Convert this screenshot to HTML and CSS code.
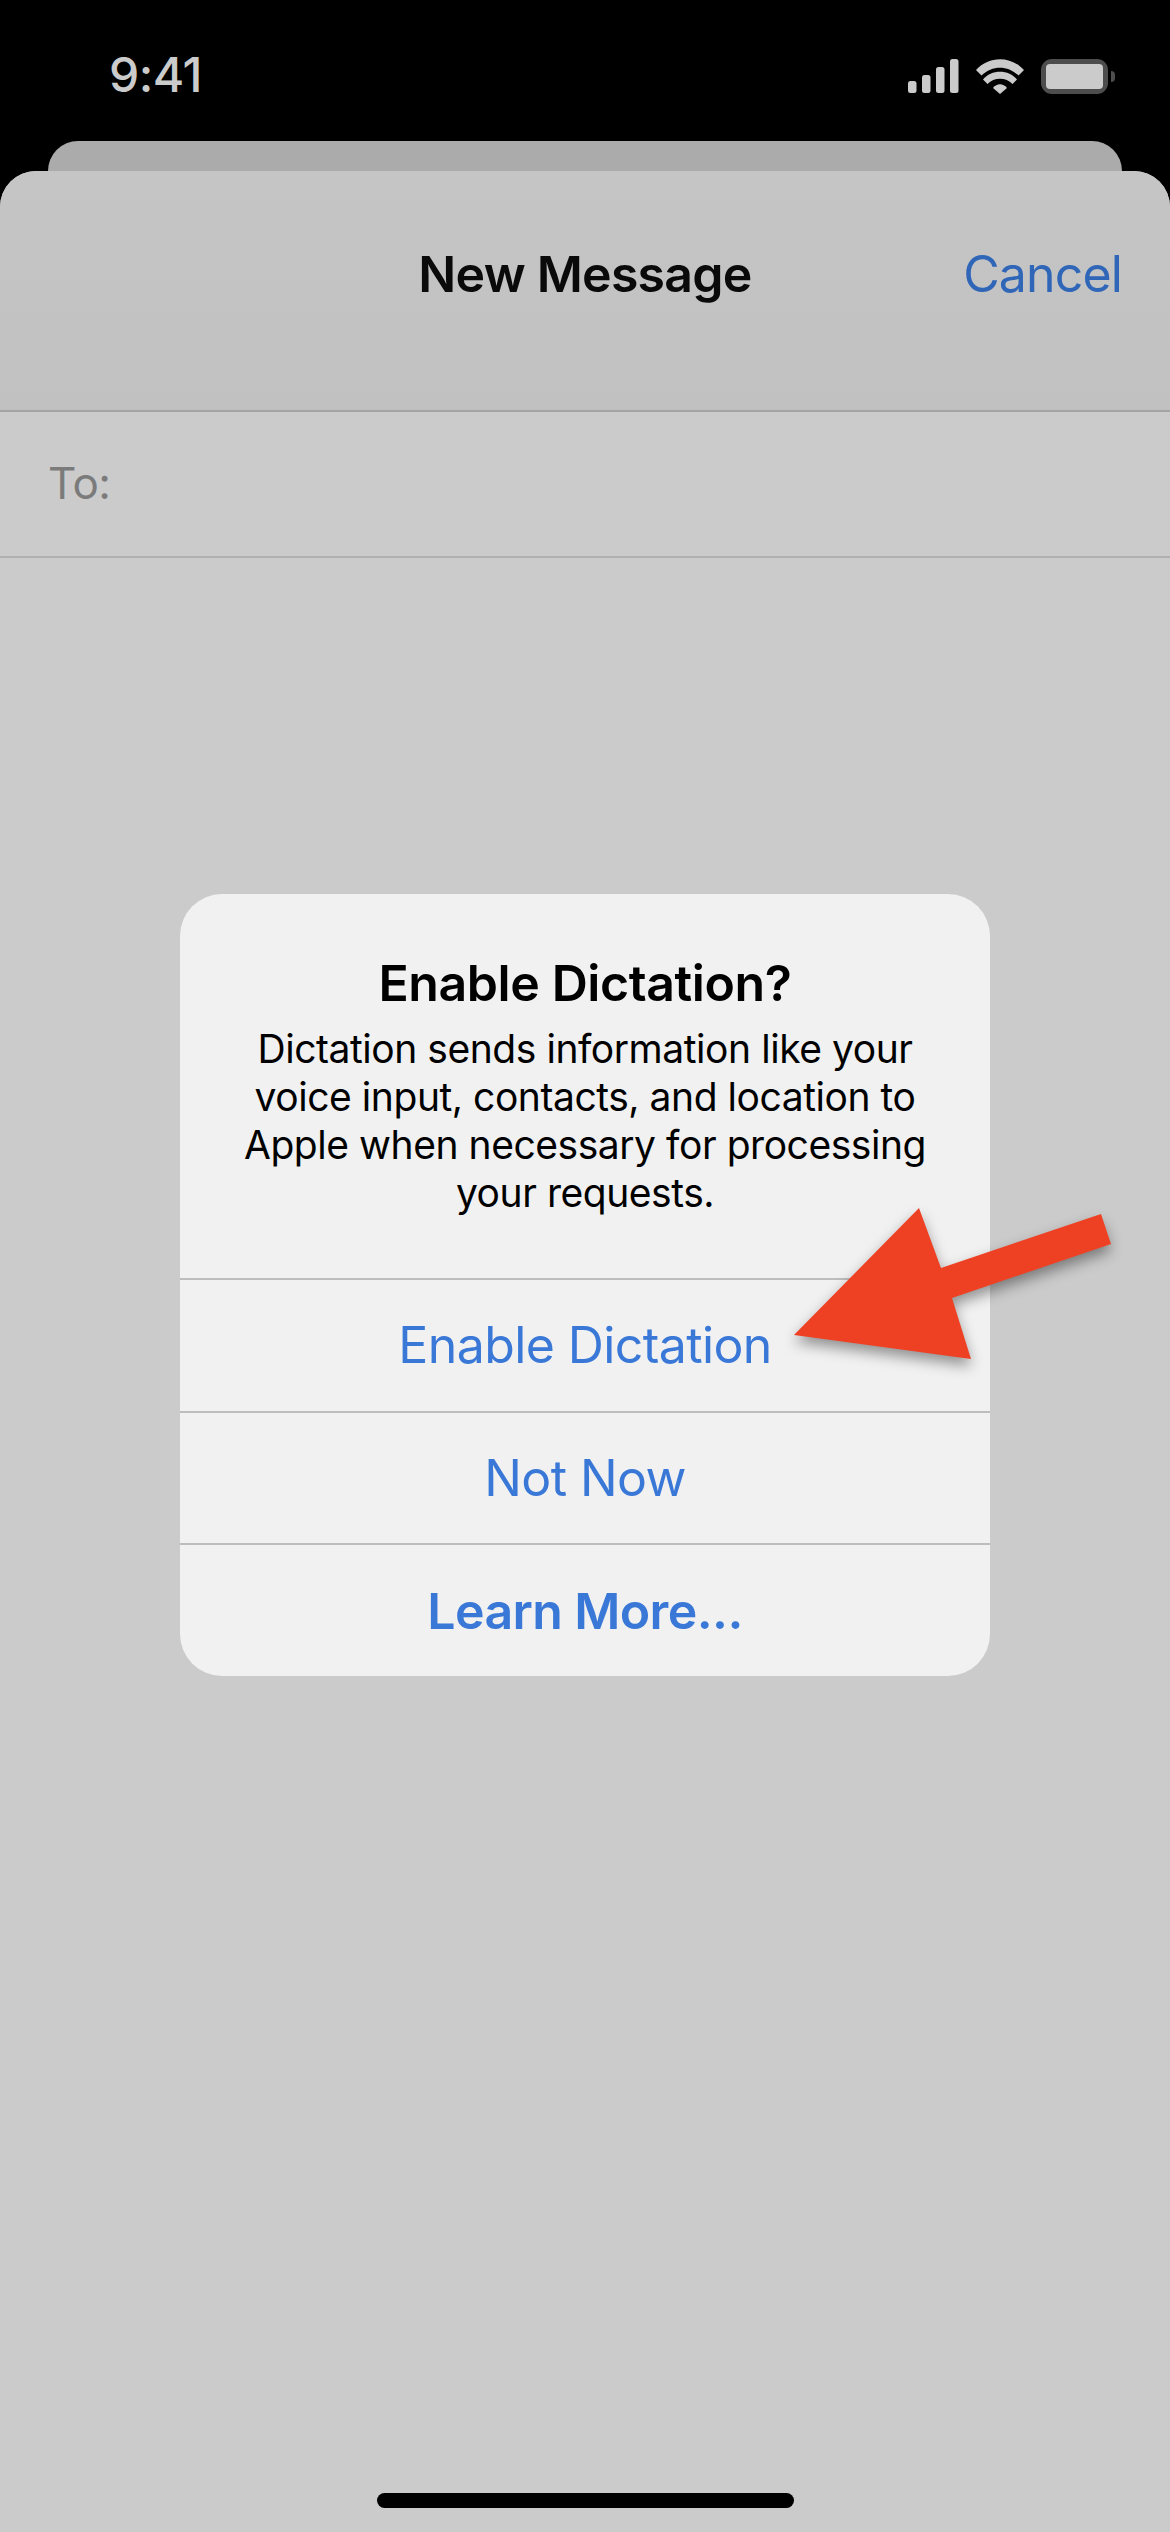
FILE: index.html
```html
<!DOCTYPE html>
<html lang="en">
<head>
<meta charset="utf-8">
<title>New Message</title>
<link rel="stylesheet" href="styles.css">
</head>
<body>
<div class="phone">
  <header class="status">
    <span class="time">9:41</span>
    <div class="status-icons">
      <svg class="signal" width="51" height="34" viewBox="0 0 51 34"><rect x="0" y="22" width="8.5" height="12" rx="2.5"/><rect x="14" y="16" width="8.5" height="18" rx="2.5"/><rect x="28" y="8" width="8.5" height="26" rx="2.5"/><rect x="42" y="0" width="8.5" height="34" rx="2.5"/></svg>
      <svg class="wifi" width="48" height="35" viewBox="0 0 48 35"><path d="M0 11C13-3.5 35-3.500 48 11L42.500 16.500C32 6 16 6 5.500 16.500Z"/><path d="M7 20.500C15 10 33 10 41 20.500L36.500 25C30 18 18 18 11.500 25Z"/><path d="M17 29C21 24 27 24 31 29L24 35Z"/></svg>
      <div class="battery"><div class="battery-body"><div class="battery-fill"></div></div><div class="battery-nub"></div></div>
    </div>
  </header>
  <div class="back-card"></div>
  <main class="sheet">
    <div class="nav">
      <h1 class="nav-title">New Message</h1>
      <button class="nav-cancel">Cancel</button>
    </div>
    <div class="to-row"><span class="to-label">To:</span></div>
    <div class="sheet-body"></div>
    <div class="home-wrap"><div class="home-bar"></div></div>
  </main>

  <section class="alert">
    <div class="alert-text">
      <h2 class="alert-title">Enable Dictation?</h2>
      <p class="alert-body">Dictation sends information like your<br>voice input, contacts, and location to<br>Apple when necessary for processing<br>your requests.</p>
    </div>
    <button class="alert-btn">Enable Dictation</button>
    <button class="alert-btn">Not Now</button>
    <button class="alert-btn alert-btn-bold">Learn More...</button>
  </section>

  <svg class="arrow" width="1170" height="2532" viewBox="0 0 1170 2532"><polygon points="794,1335 919,1208 941,1268 1101,1214 1111,1244 952,1298 971,1359"/></svg>
</div>
</body>
</html>
```
FILE: styles.css
```css
* { box-sizing: border-box; margin: 0; padding: 0; }
html, body { width: 1170px; height: 2532px; overflow: hidden; background: #000; }
body { font-family: Inter, "Liberation Sans", sans-serif; -webkit-font-smoothing: antialiased; }
button { font: inherit; background: none; border: 0; }

.phone { position: relative; width: 1170px; height: 2532px; display: flex; flex-direction: column; }

.status { height: 141px; flex: none; display: flex; justify-content: space-between; align-items: flex-start; padding: 46px 55px 0 109px; color: #cbcbcb; }
.time { font-size: 48px; font-weight: 500; line-height: 58px; letter-spacing: -0.5px; }
.status-icons { display: flex; align-items: flex-start; gap: 17px; padding-top: 13px; }
.signal, .wifi { fill: #cbcbcb; display: block; }
.battery { display: flex; align-items: center; gap: 3px; }
.battery-body { width: 67px; height: 35px; border: 5px solid #4d4d4d; border-radius: 11px; }
.battery-fill { width: 100%; height: 100%; background: #cbcbcb; border-radius: 4px; }
.battery-nub { width: 4px; height: 11px; background: #4d4d4d; border-radius: 0 4px 4px 0; }

.back-card { flex: none; height: 30px; margin: 0 48px; background: #ababab; border-radius: 30px 30px 0 0; }

.sheet { flex: 1; display: flex; flex-direction: column; background: #cbcbcb; border-radius: 36px 36px 0 0; overflow: hidden; }
.nav { flex: none; position: relative; height: 241px; background: linear-gradient(#c5c5c5, #c1c1c1); border-bottom: 2px solid #a4a4a4; display: flex; justify-content: center; }
.nav-title { font-size: 50px; font-weight: 600; line-height: 60px; color: #0a0a0a; margin-top: 73px; letter-spacing: -0.75px; }
.nav-cancel { position: absolute; right: 48px; top: 73px; font-size: 50px; line-height: 60px; color: #2f66b8; letter-spacing: -0.85px; }
.to-row { flex: none; height: 146px; border-bottom: 2px solid #b0b0b0; padding: 43px 0 0 48px; }
.to-label { font-size: 44px; line-height: 56px; color: #7b7b7b; letter-spacing: -0.5px; }
.sheet-body { flex: 1; }
.home-wrap { flex: none; height: 39px; display: flex; justify-content: center; }
.home-bar { width: 417px; height: 15px; border-radius: 8px; background: #000; }

.alert { position: absolute; left: 180px; top: 894px; width: 810px; height: 782px; background: #f1f1f1; border-radius: 42px; overflow: hidden; display: flex; flex-direction: column; }
.alert-text { flex: none; height: 384px; padding-top: 59px; text-align: center; color: #000; }
.alert-title { font-size: 50px; font-weight: 600; line-height: 60px; letter-spacing: -0.4px; }
.alert-body { font-size: 39px; line-height: 48px; margin-top: 12px; letter-spacing: -0.45px; }
.alert-btn { flex: 1; border-top: 2px solid #bdbdbd; font-size: 50px; color: #3a78d8; letter-spacing: -0.6px; }
.alert-btn-bold { font-weight: 600; }

.arrow { position: absolute; left: 0; top: 0; fill: #ee4124; filter: drop-shadow(0 7px 7px rgba(0,0,0,.4)); pointer-events: none; }
```
